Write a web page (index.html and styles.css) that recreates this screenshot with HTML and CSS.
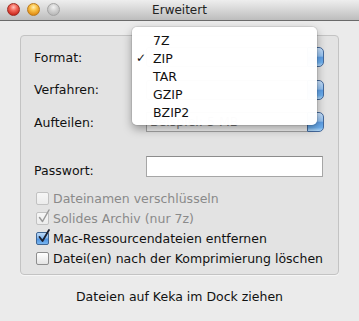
FILE: index.html
```html
<!DOCTYPE html>
<html lang="de">
<head>
<meta charset="utf-8">
<title>Erweitert</title>
<link rel="stylesheet" href="styles.css">
</head>
<body>
<div class="window">
  <header class="titlebar">
    <div class="lights">
      <span class="light red"></span>
      <span class="light yellow"></span>
      <span class="light gray"></span>
    </div>
    <div class="title">Erweitert</div>
    <div></div>
  </header>
  <main class="content">
    <section class="group">
      <div class="fields">
        <div class="row">
          <span class="label">Format:</span>
          <div class="popup"><span class="popup-body"></span><span class="popup-cap"></span></div>
        </div>
        <div class="row">
          <span class="label">Verfahren:</span>
          <div class="popup"><span class="popup-body"></span><span class="popup-cap"></span></div>
        </div>
        <div class="row">
          <span class="label">Aufteilen:</span>
          <div class="popup"><span class="popup-body combo">Beispiel: 5 MB</span><span class="popup-cap"></span></div>
        </div>
      </div>
      <div class="row pw">
        <span class="label pw-label">Passwort:</span>
        <span class="textfield"></span>
      </div>
      <ul class="checks">
        <li class="check disabled"><span class="box"></span><span>Dateinamen verschlüsseln</span></li>
        <li class="check disabled"><span class="box"><svg class="tick" viewBox="0 0 14 14"><path d="M2.5 7.5 L5.5 11.5 L12 0"/></svg></span><span>Solides Archiv (nur 7z)</span></li>
        <li class="check"><span class="box on"><svg class="tick" viewBox="0 0 14 14"><path d="M2.5 7 L5.5 11 L12 0"/></svg></span><span>Mac-Ressourcendateien entfernen</span></li>
        <li class="check"><span class="box"></span><span>Datei(en) nach der Komprimierung löschen</span></li>
      </ul>
    </section>
    <p class="hint">Dateien auf Keka im Dock ziehen</p>
  </main>
  <ul class="menu">
    <li class="item"><span class="mark"></span>7Z</li>
    <li class="item"><span class="mark">✓</span>ZIP</li>
    <li class="item"><span class="mark"></span>TAR</li>
    <li class="item"><span class="mark"></span>GZIP</li>
    <li class="item"><span class="mark"></span>BZIP2</li>
  </ul>
</div>
</body>
</html>
```

FILE: styles.css
```css
* { box-sizing: border-box; }
html, body { margin: 0; padding: 0; }
body {
  width: 359px;
  height: 321px;
  overflow: hidden;
  background: #ebebeb;
  font-family: "DejaVu Sans", "Liberation Sans", sans-serif;
  font-size: 12.5px;
  color: #111;
}
.window { position: relative; width: 359px; height: 321px; }

.titlebar {
  height: 21px;
  display: grid;
  grid-template-columns: 1fr auto 1fr;
  align-items: center;
  background: linear-gradient(#eeeeee, #d6d6d6 50%, #bdbdbd);
  border-bottom: 1px solid #6a6a6a;
}
.lights { display: flex; gap: 7px; padding-left: 7px; padding-bottom: 1px; }
.light { width: 13px; height: 13px; border-radius: 50%; display: block; }
.light.red {
  background: radial-gradient(circle at 50% 30%, #ffc4bd 0, #f36a5c 35%, #c9261b 80%);
  border: 1px solid #9c2b22;
}
.light.yellow {
  background: radial-gradient(circle at 50% 30%, #fff0b8 0, #f9c34a 35%, #e08a12 80%);
  border: 1px solid #b97a1c;
}
.light.gray {
  background: radial-gradient(circle at 50% 30%, #f2f2f2 0, #d2d2d2 40%, #b5b5b5 85%);
  border: 1px solid #a3a3a3;
}
.title { font-size: 12px; color: #222; padding-bottom: 1px; }

.content { display: flex; flex-direction: column; }
.group {
  margin: 14px 20px 0 20px;
  border: 1px solid #c3c3c3;
  border-radius: 4px;
  background: #e3e3e3;
  padding: 11px 0 6px 13px;
  box-shadow: 0 1px 0 #f6f6f6;
}
.fields { display: flex; flex-direction: column; gap: 12.5px; }
.row { display: flex; align-items: center; height: 20px; }
.label { width: 112px; flex: none; }
.popup { display: flex; width: 178px; height: 20px; }
.popup-body {
  flex: 1;
  border: 1px solid #a3a3a3;
  border-right: none;
  border-radius: 3px 0 0 3px;
  background: linear-gradient(#ffffff, #f0f0f0);
  padding-left: 5px;
  line-height: 18px;
}
.popup-body.combo {
  border-radius: 0;
  background: #f2f2f2;
  color: #7c7c7c;
  padding-left: 3px;
}
.popup-cap {
  width: 17px;
  border: 1px solid #456a9c;
  border-radius: 0 5px 5px 0;
  background: linear-gradient(#c7e0fb 0%, #93c1f1 45%, #5e9fe6 52%, #6db0f0 80%, #b5daf9 100%);
}
.pw { margin-top: 24px; height: 21px; }
.pw-label { margin-top: 7px; }
.textfield {
  width: 177px;
  height: 21px;
  background: #ffffff;
  border: 1px solid #a6a6a6;
  border-top-color: #8c8c8c;
}

.checks { list-style: none; margin: 11px 0 0 2px; padding: 0; }
.check { display: flex; align-items: center; gap: 4px; height: 20px; }
.check.disabled { color: #8a8a8a; }
.box {
  position: relative;
  width: 13px;
  height: 13px;
  flex: none;
  border: 1px solid #8e8e8e;
  border-radius: 2px;
  background: linear-gradient(#ffffff, #e4e4e4);
}
.check.disabled .box { border-color: #c2c2c2; background: linear-gradient(#f6f6f6, #ececec); }
.box.on {
  border-color: #3f6592;
  background: linear-gradient(#bcd9f8 0%, #86b9ee 45%, #4f93e0 55%, #79b6f0 100%);
}
.tick {
  position: absolute;
  left: 0;
  top: -3px;
  width: 14px;
  height: 14px;
  overflow: visible;
  fill: none;
  stroke: #1c2030;
  stroke-width: 1.8;
  stroke-linecap: round;
  stroke-linejoin: round;
}
.check.disabled .tick { stroke: #9a9a9a; stroke-width: 1.5; }

.hint { margin: 13px 0 0 0; text-align: center; line-height: 17px; color: #111; }

.menu {
  position: absolute;
  left: 132px;
  top: 27px;
  width: 185px;
  margin: 0;
  padding: 4px 0;
  list-style: none;
  background: rgba(255, 255, 255, 0.98);
  border-radius: 5px;
  box-shadow: 0 0 0 1px rgba(0, 0, 0, 0.08), 0 4px 10px rgba(0, 0, 0, 0.35);
}
.item { display: flex; align-items: center; height: 18px; }
.mark { width: 21px; padding-left: 4px; font-size: 12px; }
```
